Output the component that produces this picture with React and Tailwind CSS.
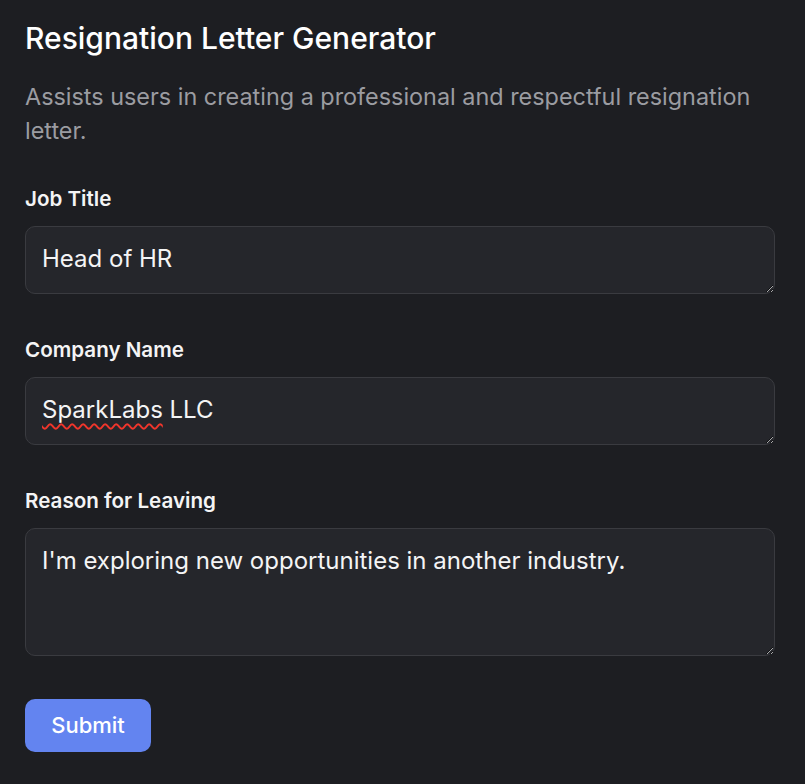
import React from 'react';

const Field = ({ label, value, height, squiggle }) => (
  <div className="flex flex-col">
    <label className="text-[20.6px] leading-7 font-semibold text-[#f4f4f5] mb-[13px]">{label}</label>
    <div className="relative">
      <textarea
        defaultValue={value}
        spellCheck={false}
        className={`w-full ${height} block resize-y rounded-[10px] border border-[#3a3b40] bg-[#25262b] px-4 py-4 text-[24px] leading-8 text-[#f4f4f5] outline-none`}
      />
      {squiggle && (
        <span className="pointer-events-none absolute left-[17px] top-[17px] text-[24px] leading-8 text-transparent underline decoration-wavy decoration-[#f2352b] decoration-[1.5px] underline-offset-[5px]">
          {squiggle}
        </span>
      )}
    </div>
  </div>
);

export default function App() {
  return (
    <div className="min-h-screen bg-[#1d1e22] pl-[25px] pr-[30px] pt-[20px] pb-8 font-['Inter',sans-serif]">
      <h1 className="text-[30px] leading-9 font-medium text-white">Resignation Letter Generator</h1>
      <p className="mt-[24px] text-[23.4px] leading-[34px] text-[#9b9ca1]">
        Assists users in creating a professional and respectful resignation letter.
      </p>
      <div className="mt-[37px] flex flex-col gap-[42px]">
        <Field label="Job Title" value="Head of HR" height="h-[68px]" />
        <Field label="Company Name" value="SparkLabs LLC" height="h-[68px]" squiggle="SparkLabs" />
        <Field label="Reason for Leaving" value="I'm exploring new opportunities in another industry." height="h-[128px]" />
      </div>
      <button className="mt-[43px] h-[53px] w-[126px] rounded-[10px] bg-[#6384f0] text-[22px] font-medium text-white">
        Submit
      </button>
    </div>
  );
}
